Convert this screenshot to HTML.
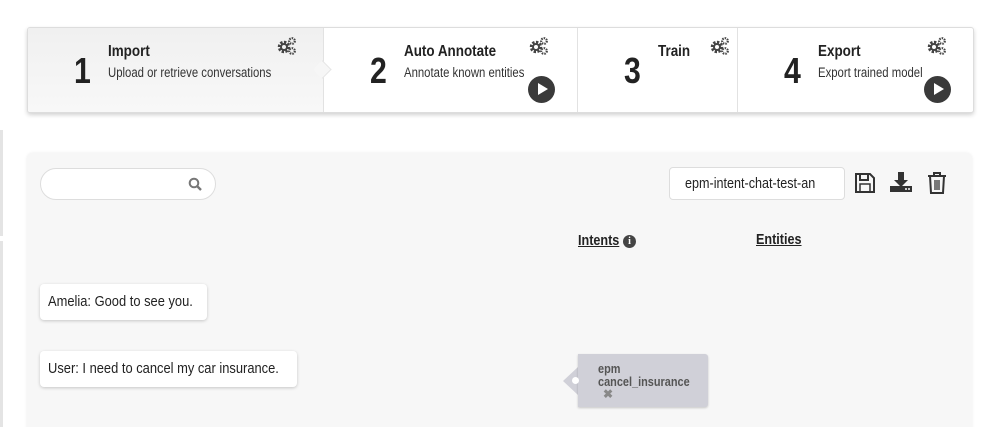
<!DOCTYPE html>
<html><head><style>
html,body{margin:0;width:1000px;height:427px;overflow:hidden}
body{background:#fff;position:relative;font-family:"Liberation Sans",sans-serif;color:#222}
.abs{position:absolute}
.c{display:inline-block;transform:scaleX(.84);transform-origin:0 0;white-space:nowrap}
.steps{left:27px;top:27px;width:945px;height:84px;border:1px solid #ddd;border-radius:3px;box-shadow:0 2px 4px rgba(0,0,0,.18);background:#fff;overflow:hidden}
.seg{position:absolute;top:0;height:84px;border-right:1px solid #e2e2e2}
.num{position:absolute;font-size:36px;font-weight:bold;top:22px}
.t{position:absolute;font-size:16px;font-weight:bold;top:15px}
.s{position:absolute;font-size:13.5px;top:37px;color:#333}
.gear{position:absolute;top:8px}
.play{position:absolute;width:27px;height:27px;border-radius:50%;background:#3a3a3a;top:48px}
.play:after{content:"";position:absolute;left:10px;top:7px;border-left:10px solid #fff;border-top:6.5px solid transparent;border-bottom:6.5px solid transparent}
.panel{left:27px;top:153px;width:945px;height:290px;background:#f7f7f7;border-radius:6px;box-shadow:0 0 3px rgba(0,0,0,.08)}
.msg{background:#fff;border-radius:4px;box-shadow:0 1px 3px rgba(0,0,0,.2);font-size:15px;line-height:36px;height:36px}
.msg .c{transform:scaleX(.86)}
.u{text-decoration:underline}
</style></head><body>
<svg width="0" height="0" style="position:absolute"><defs>
<g id="g"><circle cx="8" cy="11" r="4.5" fill="none" stroke="#444" stroke-width="3.5" stroke-dasharray="2.2 1.3"/><circle cx="8" cy="11" r="3" fill="none" stroke="#444" stroke-width="2"/><circle cx="16" cy="5" r="2.8" fill="none" stroke="#444" stroke-width="2.2" stroke-dasharray="1.5 1"/><circle cx="16" cy="15" r="2.8" fill="none" stroke="#444" stroke-width="2.2" stroke-dasharray="1.5 1"/></g></defs></svg>
<div class="abs" style="left:0;top:130px;width:3px;height:106px;background:#e4e4e4"></div>
<div class="abs" style="left:0;top:241px;width:3px;height:186px;background:#e4e4e4"></div>
<div class="abs steps">
 <div class="seg" style="left:0;width:295px;background:linear-gradient(#f0f0f0,#f8f8f8)">
  <div class="num" style="left:46px"><span class="c">1</span></div><div class="t" style="left:80px"><span class="c">Import</span></div><div class="s" style="left:80px"><span class="c">Upload or retrieve conversations</span></div><svg class="gear" style="left:248px" width="22" height="20"><use href="#g"/></svg>
 </div>
 <div class="abs" style="left:288px;top:35px;width:12px;height:12px;background:#f6f6f6;transform:rotate(45deg);border-top:1px solid #e6e6e6;border-right:1px solid #e6e6e6"></div>
 <div class="seg" style="left:296px;width:253px">
  <div class="num" style="left:46px"><span class="c">2</span></div><div class="t" style="left:80px"><span class="c">Auto Annotate</span></div><div class="s" style="left:80px"><span class="c">Annotate known entities</span></div><svg class="gear" style="left:204px" width="22" height="20"><use href="#g"/></svg><div class="play" style="left:204px"></div>
 </div>
 <div class="seg" style="left:550px;width:159px">
  <div class="num" style="left:46px"><span class="c">3</span></div><div class="t" style="left:80px"><span class="c">Train</span></div><svg class="gear" style="left:131px" width="22" height="20"><use href="#g"/></svg>
 </div>
 <div class="seg" style="left:710px;width:235px;border:none">
  <div class="num" style="left:46px"><span class="c">4</span></div><div class="t" style="left:80px"><span class="c">Export</span></div><div class="s" style="left:80px"><span class="c">Export trained model</span></div><svg class="gear" style="left:188px" width="22" height="20"><use href="#g"/></svg><div class="play" style="left:186px"></div>
 </div>
</div>
<div class="abs panel"></div>
<div class="abs" style="left:40px;top:168px;width:174px;height:30px;border:1px solid #ddd;border-radius:16px;background:#fff"></div>
<svg class="abs" style="left:188px;top:177px" width="14" height="14" viewBox="0 0 14 14"><circle cx="6" cy="6" r="4.3" fill="none" stroke="#777" stroke-width="2"/><path d="M9 9l4 4" stroke="#777" stroke-width="2.4"/></svg>
<div class="abs" style="left:669px;top:167px;width:174px;height:31px;border:1px solid #ddd;border-radius:4px;background:#fff;font-size:15px;line-height:31px;overflow:hidden;white-space:nowrap"><span class="c" style="margin-left:15px">epm-intent-chat-test-an</span></div>
<svg class="abs" style="left:854px;top:172px" width="22" height="22" viewBox="0 0 22 22"><path d="M2 2h14l4 4v14H2z" fill="none" stroke="#333" stroke-width="2"/><rect x="6" y="2" width="8" height="6" fill="none" stroke="#333" stroke-width="2"/><rect x="6" y="12" width="10" height="8" fill="none" stroke="#333" stroke-width="1.5"/></svg>
<svg class="abs" style="left:889px;top:171px" width="24" height="22" viewBox="0 0 24 22"><path d="M9 1h6v8h4l-7 7-7-7h4z" fill="#333"/><rect x="1" y="15" width="22" height="6" fill="#333"/><circle cx="17" cy="18" r="1" fill="#fff"/><circle cx="20" cy="18" r="1" fill="#fff"/></svg>
<svg class="abs" style="left:927px;top:172px" width="20" height="22" viewBox="0 0 20 22"><path d="M1 4h18M7 4V1h6v3M3 4l1 17h12l1-17" fill="none" stroke="#333" stroke-width="2"/><path d="M8 8v10M10 8v10M12 8v10" stroke="#333" stroke-width="1.3"/></svg>
<div class="abs" style="left:578px;top:232px;font-size:15px;font-weight:bold"><span class="c u">Intents</span></div>
<div class="abs" style="left:623px;top:235px;width:13px;height:13px;border-radius:50%;background:#444;color:#fff;font:bold 10px 'Liberation Serif',serif;text-align:center;line-height:13px">i</div>
<div class="abs" style="left:756px;top:231px;font-size:15px;font-weight:bold"><span class="c u">Entities</span></div>
<div class="abs msg" style="left:40px;top:284px;width:167px"><span class="c" style="margin-left:8px">Amelia: Good to see you.</span></div>
<div class="abs msg" style="left:40px;top:351px;width:257px"><span class="c" style="margin-left:8px">User: I need to cancel my car insurance.</span></div>
<div class="abs" style="left:563px;top:367px;width:0;height:0;border-right:15px solid #d0d0d8;border-top:14px solid transparent;border-bottom:14px solid transparent"></div>
<div class="abs" style="left:578px;top:354px;width:130px;height:53px;background:#d0d0d8;border-radius:0 3px 3px 0;box-shadow:0 1px 2px rgba(0,0,0,.2)"></div>
<div class="abs" style="left:572px;top:377px;width:7px;height:7px;border-radius:50%;background:#fff"></div>
<div class="abs" style="left:598px;top:362px;font-size:13px;font-weight:bold;color:#555;line-height:13px"><span class="c">epm<br>cancel_insurance</span></div>
<div class="abs" style="left:603px;top:387px;font-size:12px;color:#888;font-weight:bold">✖</div>
</body></html>
